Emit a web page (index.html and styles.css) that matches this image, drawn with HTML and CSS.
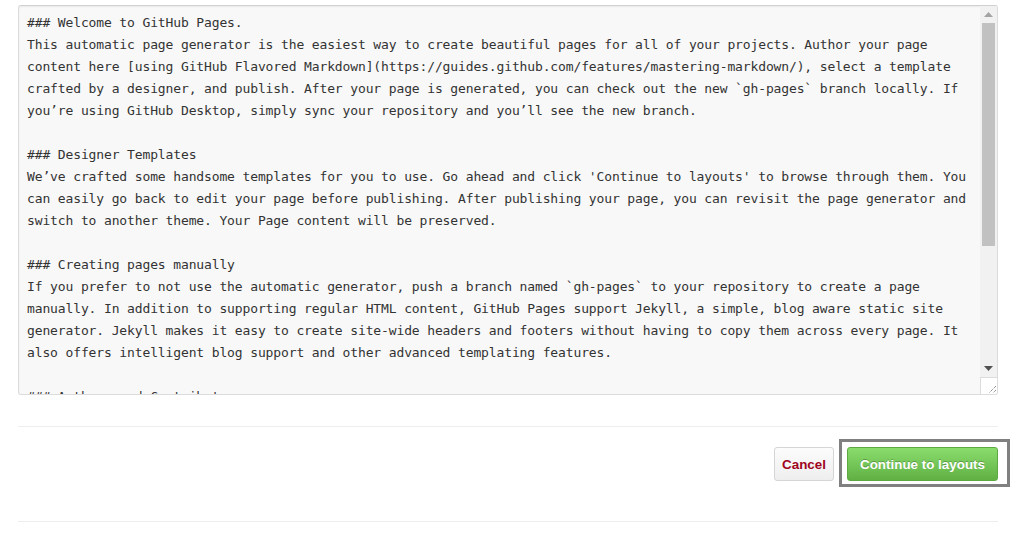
FILE: index.html
```html
<!DOCTYPE html>
<html>
<head>
<meta charset="utf-8">
<link rel="stylesheet" href="styles.css">
</head>
<body>
<div class="page">
  <div class="editor">
    <div class="editor-text">### Welcome to GitHub Pages.
This automatic page generator is the easiest way to create beautiful pages for all of your projects. Author your page
content here [using GitHub Flavored Markdown](https://guides.github.com/features/mastering-markdown/), select a template
crafted by a designer, and publish. After your page is generated, you can check out the new `gh-pages` branch locally. If
you’re using GitHub Desktop, simply sync your repository and you’ll see the new branch.

### Designer Templates
We’ve crafted some handsome templates for you to use. Go ahead and click 'Continue to layouts' to browse through them. You
can easily go back to edit your page before publishing. After publishing your page, you can revisit the page generator and
switch to another theme. Your Page content will be preserved.

### Creating pages manually
If you prefer to not use the automatic generator, push a branch named `gh-pages` to your repository to create a page
manually. In addition to supporting regular HTML content, GitHub Pages support Jekyll, a simple, blog aware static site
generator. Jekyll makes it easy to create site-wide headers and footers without having to copy them across every page. It
also offers intelligent blog support and other advanced templating features.

### Authors and Contributors</div>
    <div class="scrollbar">
      <div class="sb-track">
        <div class="sb-arrow"><svg width="9" height="5" viewBox="0 0 9 5"><path d="M4.5 0 L9 5 L0 5 Z" fill="#a3a3a3"/></svg></div>
        <div class="sb-thumb"></div>
        <div class="sb-space"></div>
        <div class="sb-arrow"><svg width="9" height="5" viewBox="0 0 9 5"><path d="M0 0 L9 0 L4.5 5 Z" fill="#505050"/></svg></div>
      </div>
      <div class="sb-corner"><svg width="10" height="10" viewBox="0 0 10 10"><path d="M9 2 L2 9 M9 6 L6 9" stroke="#666" stroke-width="1" stroke-dasharray="1 1"/></svg></div>
    </div>
  </div>
  <div class="actions">
    <button class="btn btn-cancel">Cancel</button>
    <span class="highlight"><button class="btn btn-primary">Continue to layouts</button></span>
  </div>
</div>
</body>
</html>
```
FILE: styles.css
```css
html, body {
  margin: 0;
  padding: 0;
  background: #fff;
}
.page {
  width: 980px;
  padding: 5px 0 0 18px;
}
.editor {
  display: flex;
  height: 388px;
  border: 1px solid #dcdcdc;
  border-top-color: #d0d0d0;
  border-radius: 3px;
  background: #f8f8f8;
  box-shadow: inset 0 1px 2px rgba(0,0,0,0.06);
  overflow: hidden;
}
.editor-text {
  flex: 1;
  padding: 6px 0 0 8px;
  font-family: "DejaVu Sans Mono", "Liberation Mono", monospace;
  font-size: 13px;
  letter-spacing: -0.13px;
  line-height: 22px;
  color: #333;
  white-space: pre;
  overflow: hidden;
}
.scrollbar {
  width: 17px;
  display: flex;
  flex-direction: column;
}
.sb-track {
  flex: 1;
  display: flex;
  flex-direction: column;
  background: #f1f1f1;
}
.sb-arrow {
  height: 17px;
  display: flex;
  align-items: center;
  justify-content: center;
}
.sb-thumb {
  height: 223px;
  margin: 0 2px;
  background: #c1c1c1;
}
.sb-space {
  flex: 1;
}
.sb-corner {
  height: 16px;
  background: #fff;
  border-top: 1px solid #dcdcdc;
  border-left: 1px solid #dcdcdc;
  display: flex;
  align-items: flex-end;
  justify-content: flex-end;
}
.actions {
  margin-top: 31px;
  border-top: 1px solid #eee;
  border-bottom: 1px solid #eee;
  height: 96px;
  display: flex;
  justify-content: flex-end;
  align-items: flex-start;
  padding-top: 20px;
  box-sizing: border-box;
  gap: 13px;
}
.btn {
  height: 34px;
  padding: 0 6px;
  border-radius: 3px;
  font-family: "Segoe UI", "Liberation Sans", Arial, sans-serif;
  font-size: 13.4px;
  font-weight: bold;
  cursor: pointer;
}
.btn-cancel {
  width: 60px;
  color: #a0041e;
  background: linear-gradient(#fcfcfc, #eee);
  border: 1px solid #d5d5d5;
}
.btn-primary {
  display: block;
  width: 151px;
  color: #fff;
  text-shadow: 0 -1px 0 rgba(0,0,0,0.25);
  background: linear-gradient(#8add6d, #60b044);
  border: 1px solid #5ca941;
}
.highlight {
  position: relative;
  display: block;
}
.highlight::after {
  content: "";
  position: absolute;
  left: -8px;
  right: -12px;
  top: -8px;
  bottom: -6px;
  border: 3px solid #808080;
  pointer-events: none;
}
```
